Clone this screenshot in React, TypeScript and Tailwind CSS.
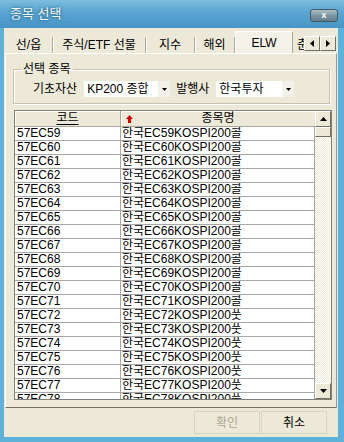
import React from 'react';

type Row = { code: string; name: string };

const rows: Row[] = Array.from({ length: 20 }, (_, i) => {
  const n = 59 + i;
  return { code: `57EC${n}`, name: `한국EC${n}KOSPI200${n <= 71 ? '콜' : '풋'}` };
});

const tabs = [
  { label: '선/옵', cls: 'w-[48px]' },
  { label: '주식/ETF 선물', cls: 'w-[93px]' },
  { label: '지수', cls: 'w-[49px]' },
  { label: '해외', cls: 'w-[40px]' },
];

const TitleBar: React.FC = () => (
  <div className="h-[28px] flex items-start justify-between pl-[10px] pr-[6px] bg-[linear-gradient(180deg,#7dbde0_0%,#5aa5d2_45%,#4896c6_100%)]">
    <span className="mt-[6px] text-[13px] leading-[16px] text-[#f3f7ef] [text-shadow:0_0_4px_#2d6f96,0_0_2px_#2d6f96]">
      종목 선택
    </span>
    <div className="mt-[9px] w-[28px] h-[13px] rounded-[3px] border border-[#3f5a66] bg-[linear-gradient(180deg,#a9bec6_0%,#7b97a3_50%,#637f8c_100%)] flex items-center justify-center">
      <span className="text-[9px] leading-[9px] font-bold text-white">x</span>
    </div>
  </div>
);

const ArrowBtn: React.FC<{ dir: 'left' | 'right' }> = ({ dir }) => (
  <div className="w-[16px] h-[15px] mb-[2px] bg-[#ece9d8] border-t border-l border-white border-r border-b border-r-[#716f64] border-b-[#716f64] flex items-center justify-center">
    <svg width="4" height="7" viewBox="0 0 4 7">
      {dir === 'left' ? <polygon points="4,0 4,7 0,3.5" fill="#000" /> : <polygon points="0,0 0,7 4,3.5" fill="#000" />}
    </svg>
  </div>
);

const TabStrip: React.FC = () => (
  <div className="h-[25px] flex items-end leading-[14px]">
    {tabs.map(t => (
      <div
        key={t.label}
        className={`${t.cls} h-[16px] flex items-center justify-center border-r border-[#aca899] shadow-[1px_0_0_#ffffff] whitespace-nowrap`}
      >
        {t.label}
      </div>
    ))}
    <div className="w-[58px] h-[22px] flex items-center justify-center bg-[#f3f1e8] border-t border-l border-white border-r border-r-[#aca899]">
      ELW
    </div>
    <div className="w-[11px] h-[16px] overflow-hidden pl-[4px] flex items-center whitespace-nowrap">춘</div>
    <ArrowBtn dir="left" />
    <ArrowBtn dir="right" />
  </div>
);

const Combo: React.FC<{ text: string; cls: string }> = ({ text, cls }) => (
  <div className={`${cls} h-[16px] bg-white flex items-center`}>
    <span className="flex-1 pl-[3px] whitespace-nowrap leading-[14px]">{text}</span>
    <div className="w-[12px] h-[16px] bg-[#f2f1ea] flex items-center justify-center">
      <svg width="5" height="3" viewBox="0 0 5 3">
        <polygon points="0,0 5,0 2.5,3" fill="#000" />
      </svg>
    </div>
  </div>
);

const ScrollBtn: React.FC<{ up?: boolean }> = ({ up }) => (
  <div className="w-[16px] h-[16px] bg-[#ece9d8] border-t border-l border-white border-r border-b border-r-[#716f64] border-b-[#716f64] flex items-center justify-center">
    <svg width="7" height="4" viewBox="0 0 7 4">
      {up ? <polygon points="0,4 7,4 3.5,0" fill="#000" /> : <polygon points="0,0 7,0 3.5,4" fill="#000" />}
    </svg>
  </div>
);

const Grid: React.FC = () => (
  <div className="ml-[1px] w-[318px] h-[290px] border border-[#808078] flex bg-white">
    <div className="w-[300px] flex flex-col overflow-hidden">
      <div className="h-[16px] shrink-0 flex bg-[#ece9d8] border-b border-[#aca899]">
        <div className="w-[106px] flex items-center justify-center border-r border-[#aca899] shadow-[inset_1px_1px_0_#ffffff]">
          <span className="underline underline-offset-2 leading-[13px]">코드</span>
        </div>
        <div className="flex-1 flex items-center pl-[5px] shadow-[inset_1px_1px_0_#ffffff]">
          <svg width="7" height="8" viewBox="0 0 7 8">
            <polygon points="3.5,0 7,4 5,4 5,8 2,8 2,4 0,4" fill="#d40000" />
          </svg>
          <span className="flex-1 text-center pr-[12px] leading-[13px]">종목명</span>
        </div>
      </div>
      <div className="flex-1 overflow-hidden">
        {rows.map(r => (
          <div key={r.code} className="h-[14px] flex border-b border-[#a7a7a7]">
            <div className="w-[106px] pl-[2px] border-r border-[#a7a7a7] leading-[13px] whitespace-nowrap">{r.code}</div>
            <div className="flex-1 pl-[1px] leading-[13px] whitespace-nowrap overflow-hidden border-r border-[#a7a7a7]">{r.name}</div>
          </div>
        ))}
      </div>
    </div>
    <div className="w-[16px] flex flex-col">
      <ScrollBtn up />
      <div className="h-[10px] bg-[#ece9d8] border-t border-l border-white border-r border-b border-r-[#716f64] border-b-[#716f64]" />
      <div className="flex-1 bg-[image:repeating-conic-gradient(#ece9d8_0_25%,#ffffff_0_50%)] bg-[length:2px_2px]" />
      <ScrollBtn />
    </div>
  </div>
);

const Panel: React.FC = () => (
  <div className="h-[355px] flex flex-col border-t border-l border-white border-r border-b border-r-[#919b9c] border-b-[#716f64] pl-[7px] pt-[8px]">
    <fieldset className="w-[317px] border border-[#c5c2b2] shadow-[inset_1px_1px_0_#ffffff,1px_1px_0_#ffffff] pt-[5px] pb-[6px]">
      <legend className="ml-[7px] px-[2px] leading-[14px]">선택 종목</legend>
      <div className="flex items-center pl-[19px] leading-[14px]">
        <span className="whitespace-nowrap">기초자산</span>
        <Combo text="KP200 종합" cls="ml-[7px] w-[86px]" />
        <span className="ml-[6px] whitespace-nowrap">발행사</span>
        <Combo text="한국투자" cls="ml-[7px] w-[78px]" />
      </div>
    </fieldset>
    <div className="mt-[6px]">
      <Grid />
    </div>
  </div>
);

const ButtonRow: React.FC = () => (
  <div className="h-[29px] flex items-center justify-end pr-[10px] leading-[14px]">
    <div className="w-[66px] h-[23px] flex items-center justify-center text-[#aca899] border border-[#d6d3c4]">확인</div>
    <div className="ml-[1px] w-[66px] h-[23px] flex items-center justify-center border border-[#d6d3c4]">취소</div>
  </div>
);

export default function App() {
  return (
    <div className="w-[344px] h-[442px] flex flex-col bg-[#5eb2da] overflow-hidden font-['Liberation_Sans','Noto_Sans_CJK_KR',sans-serif] text-[12px] text-black">
      <TitleBar />
      <div className="flex-1 flex pl-[4px] pr-[6px] pb-[5px]">
        <div className="flex-1 flex flex-col bg-[#ece9d8] px-[1px]">
          <TabStrip />
          <Panel />
          <ButtonRow />
        </div>
      </div>
    </div>
  );
}
